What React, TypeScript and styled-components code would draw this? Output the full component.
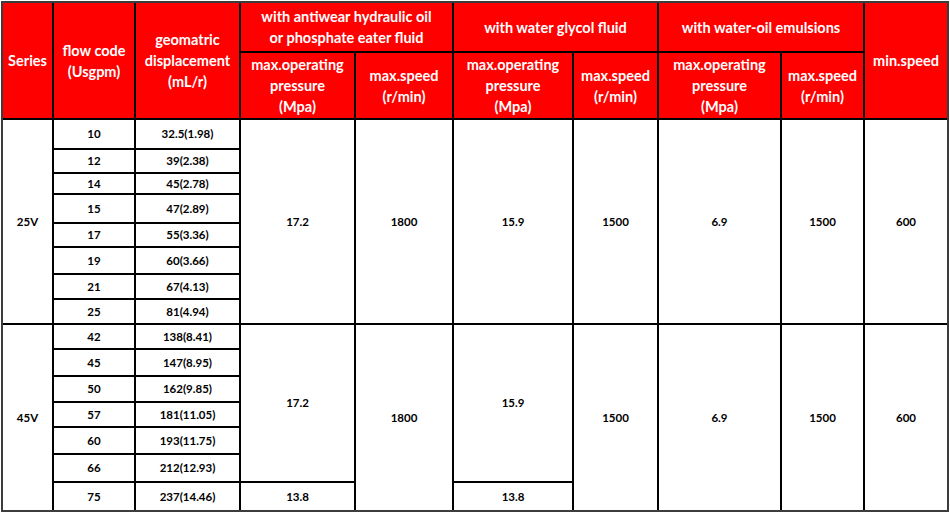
import React from "react";
import styled, { createGlobalStyle } from "styled-components";

const Global = createGlobalStyle`
  html, body { margin: 0; padding: 0; background: #ffffff; }
  body { font-family: "Lato", "Liberation Sans", sans-serif; }
`;

const Table = styled.div`
  margin: 1px 0 0 1px;
  width: 944px;
  display: grid;
  grid-template-columns: 49px 80px 103px 113px 96px 118px 83px 121px 81px 82px;
  grid-template-rows: 48px 65px 28px 22px 19px 27px 22px 25px 23px 23px 23px 25px 24px 23px 25px 26px 27px;
  gap: 2px;
  background: #000;
  border: 2px solid #3c3c3c;
`;

const Cell = styled.div<{ $c: number; $r: number; $cs?: number; $rs?: number; $head?: boolean }>`
  grid-column: ${(p) => p.$c} / span ${(p) => p.$cs ?? 1};
  grid-row: ${(p) => p.$r} / span ${(p) => p.$rs ?? 1};
  display: flex;
  align-items: center;
  justify-content: center;
  text-align: center;
  font-weight: 700;
  background: ${(p) => (p.$head ? "#ff0000" : "#ffffff")};
  color: ${(p) => (p.$head ? "#ffffff" : "#000000")};
  font-size: ${(p) => (p.$head ? "14.5px" : "11.5px")};
  line-height: ${(p) => (p.$head ? "21px" : "14px")};
`;

const Lines = ({ t }: { t: string[] }) => (
  <span>
    {t.map((s, i) => (
      <React.Fragment key={i}>
        {i > 0 && <br />}
        {s}
      </React.Fragment>
    ))}
  </span>
);

const flows25 = [
  ["10", "32.5(1.98)"],
  ["12", "39(2.38)"],
  ["14", "45(2.78)"],
  ["15", "47(2.89)"],
  ["17", "55(3.36)"],
  ["19", "60(3.66)"],
  ["21", "67(4.13)"],
  ["25", "81(4.94)"],
];
const flows45 = [
  ["42", "138(8.41)"],
  ["45", "147(8.95)"],
  ["50", "162(9.85)"],
  ["57", "181(11.05)"],
  ["60", "193(11.75)"],
  ["66", "212(12.93)"],
  ["75", "237(14.46)"],
];

export default function App() {
  return (
    <>
      <Global />
      <Table>
        <Cell $head $c={1} $r={1} $rs={2}>Series</Cell>
        <Cell $head $c={2} $r={1} $rs={2}><Lines t={["flow code", "(Usgpm)"]} /></Cell>
        <Cell $head $c={3} $r={1} $rs={2}><Lines t={["geomatric", "displacement", "(mL/r)"]} /></Cell>
        <Cell $head $c={4} $r={1} $cs={2}><Lines t={["with antiwear hydraulic oil", "or phosphate eater fluid"]} /></Cell>
        <Cell $head $c={6} $r={1} $cs={2}>with water glycol fluid</Cell>
        <Cell $head $c={8} $r={1} $cs={2}>with water-oil emulsions</Cell>
        <Cell $head $c={10} $r={1} $rs={2}>min.speed</Cell>
        {[4, 6, 8].map((c) => (
          <React.Fragment key={c}>
            <Cell $head $c={c} $r={2}><Lines t={["max.operating", "pressure", "(Mpa)"]} /></Cell>
            <Cell $head $c={c + 1} $r={2}><Lines t={["max.speed", "(r/min)"]} /></Cell>
          </React.Fragment>
        ))}

        <Cell $c={1} $r={3} $rs={8}>25V</Cell>
        {flows25.map(([f, d], i) => (
          <React.Fragment key={f}>
            <Cell $c={2} $r={3 + i}>{f}</Cell>
            <Cell $c={3} $r={3 + i}>{d}</Cell>
          </React.Fragment>
        ))}
        <Cell $c={4} $r={3} $rs={8}>17.2</Cell>
        <Cell $c={5} $r={3} $rs={8}>1800</Cell>
        <Cell $c={6} $r={3} $rs={8}>15.9</Cell>
        <Cell $c={7} $r={3} $rs={8}>1500</Cell>
        <Cell $c={8} $r={3} $rs={8}>6.9</Cell>
        <Cell $c={9} $r={3} $rs={8}>1500</Cell>
        <Cell $c={10} $r={3} $rs={8}>600</Cell>

        <Cell $c={1} $r={11} $rs={7}>45V</Cell>
        {flows45.map(([f, d], i) => (
          <React.Fragment key={f}>
            <Cell $c={2} $r={11 + i}>{f}</Cell>
            <Cell $c={3} $r={11 + i}>{d}</Cell>
          </React.Fragment>
        ))}
        <Cell $c={4} $r={11} $rs={6}>17.2</Cell>
        <Cell $c={4} $r={17}>13.8</Cell>
        <Cell $c={5} $r={11} $rs={7}>1800</Cell>
        <Cell $c={6} $r={11} $rs={6}>15.9</Cell>
        <Cell $c={6} $r={17}>13.8</Cell>
        <Cell $c={7} $r={11} $rs={7}>1500</Cell>
        <Cell $c={8} $r={11} $rs={7}>6.9</Cell>
        <Cell $c={9} $r={11} $rs={7}>1500</Cell>
        <Cell $c={10} $r={11} $rs={7}>600</Cell>
      </Table>
    </>
  );
}
